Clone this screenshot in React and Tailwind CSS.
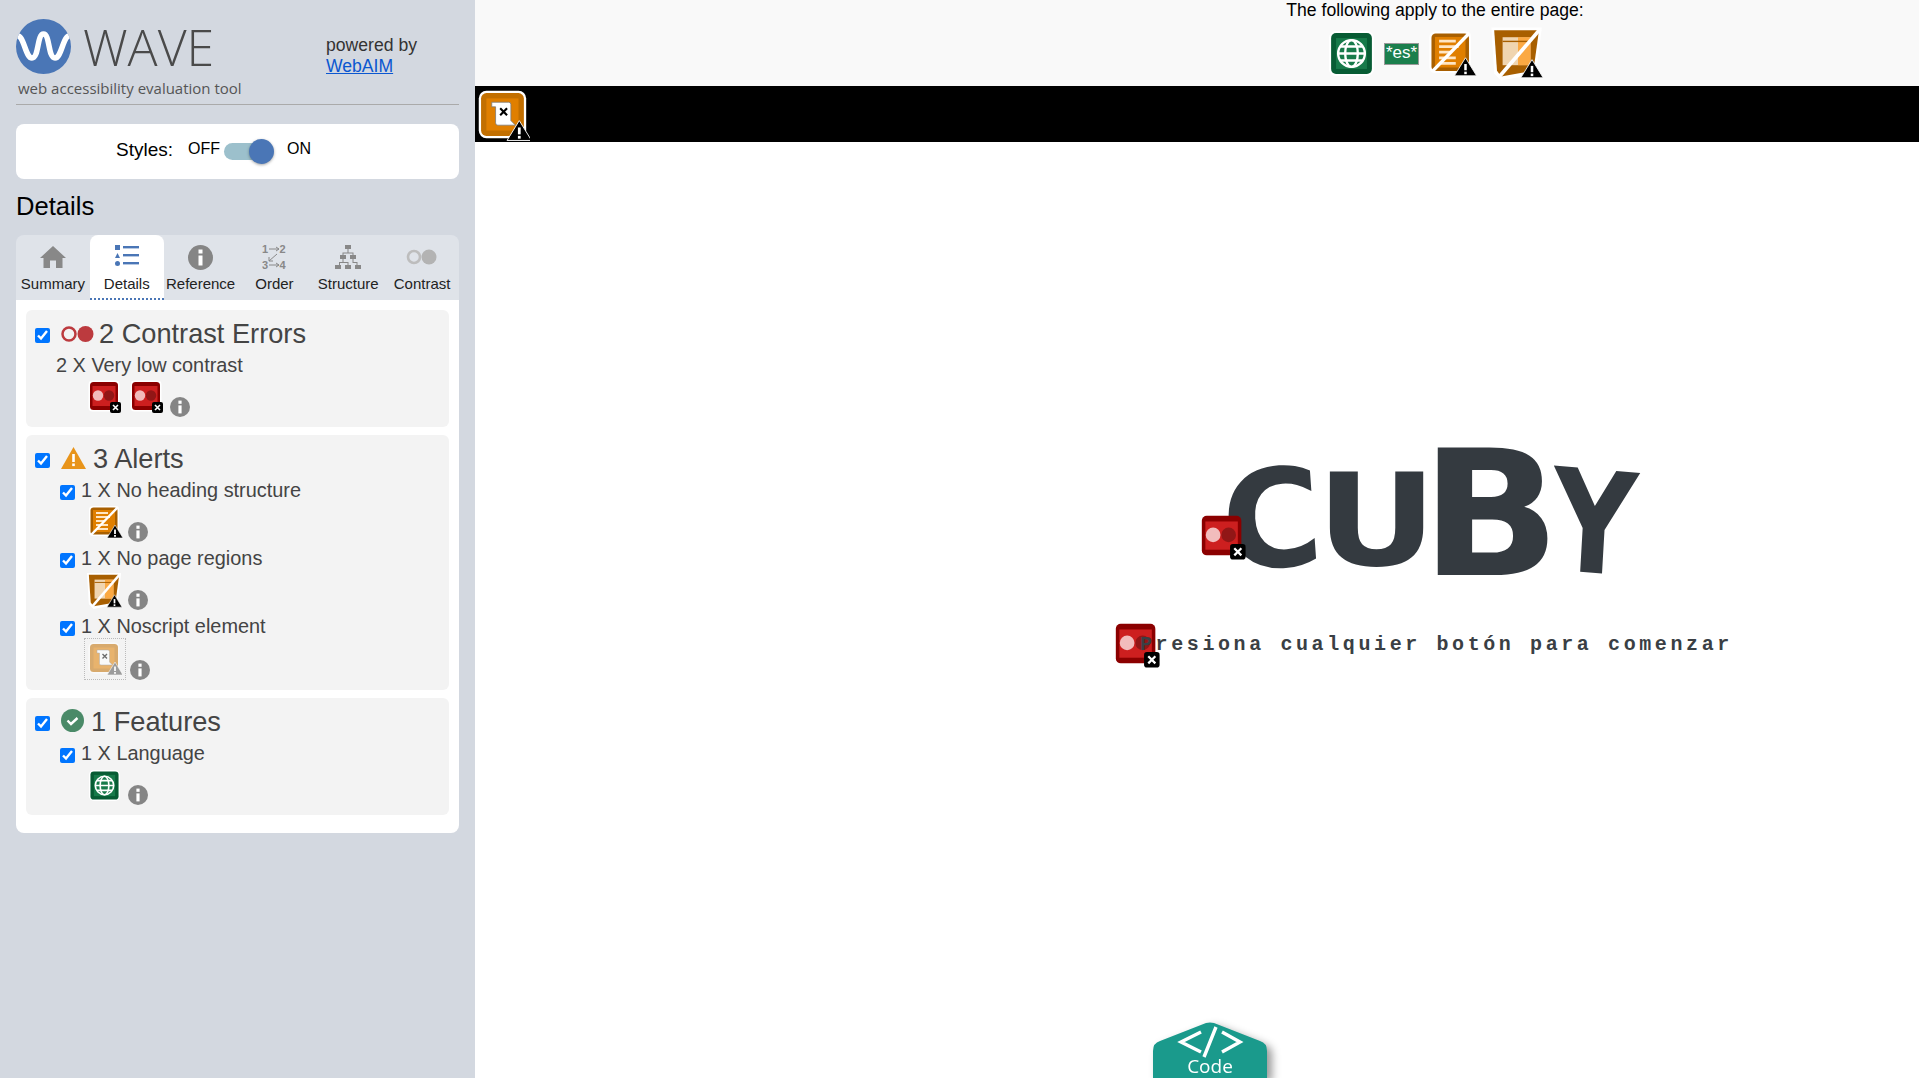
import React from "react";

const arial = "font-['Liberation_Sans',Arial,sans-serif]";

// Small black corner badge with a white x
function ErrorBadge() {
    return (
        <g>
            <rect x="22" y="22" width="11" height="11" rx="2" fill="#000" />
            <path d="M25 25l5 5M30 25l-5 5" stroke="#fff" strokeWidth="1.6" />
        </g>
    );
}

// Small black warning triangle
function AlertBadge({ fill = "#000" }) {
    return (
        <g>
            <path d="M27 20L35 33H19Z" fill={fill} stroke="#fff" strokeWidth="0.6" />
            <rect x="26.1" y="24.5" width="1.8" height="4.5" fill="#fff" />
            <rect x="26.1" y="30" width="1.8" height="1.8" fill="#fff" />
        </g>
    );
}

function ContrastShot({ className }) {
    return (
        <svg viewBox="0 0 34 34" className={className}>
            <rect x="0.5" y="0.5" width="31" height="31" rx="4" fill="#fff" />
            <rect x="2" y="2" width="28" height="28" rx="3.5" fill="#8b0000" />
            <rect x="4.5" y="6" width="23" height="20" fill="#cd1f1f" />
            <circle cx="10" cy="15.5" r="5.2" fill="#f2bcbc" />
            <circle cx="21" cy="15.5" r="5.2" fill="#911616" />
            <ErrorBadge />
        </svg>
    );
}

function HeadingShot({ className }) {
    return (
        <svg viewBox="0 0 36 36" className={className}>
            <rect x="1" y="1" width="30" height="30" rx="4" fill="#fff" />
            <rect x="2.5" y="2.5" width="27" height="27" rx="3" fill="#a85f00" />
            <rect x="5" y="5" width="22" height="22" fill="#e07f00" />
            <path d="M8 8h12M8 12h14M8 16h9M8 20h12M8 24h12" stroke="#ffe6c4" strokeWidth="2" />
            <path d="M30 2L3 30" stroke="#fff" strokeWidth="2.4" />
            <AlertBadge />
        </svg>
    );
}

function RegionShot({ className }) {
    return (
        <svg viewBox="0 0 40 40" className={className}>
            <path d="M1 1H37L33 34L8 39L3 34Z" fill="#fff" />
            <path d="M3 3H35L31 32L8 36L5 32Z" fill="#a85f00" />
            <path d="M9 8H29V28H9Z" fill="#f0d5b0" />
            <path d="M20 8H29V28H20Z" fill="#ff9a1f" opacity="0.75" />
            <path d="M9 11H29" stroke="#a85f00" strokeWidth="1" />
            <path d="M36 2L6 37" stroke="#fff" strokeWidth="2.6" />
            <g transform="translate(3 4)">
                <AlertBadge />
            </g>
        </svg>
    );
}

function NoscriptShot({ className, faded }) {
    return (
        <svg viewBox="0 0 34 34" className={className} opacity={faded ? 0.55 : 1}>
            <rect x="0.5" y="0.5" width="31" height="31" rx="5" fill="#fff" />
            <rect x="2" y="2" width="28" height="28" rx="3.5" fill="#c26f00" />
            <rect x="5.5" y="5.5" width="21" height="21" fill="#e07f00" />
            <path d="M9 8H20Q21.5 8 21.5 9.5V20L24.5 23H13Q11.5 23 11.5 21.5V11H9Z" fill="#fff" stroke="#777" strokeWidth="0.5" />
            <path d="M14.5 12l4.5 4.5M19 12l-4.5 4.5" stroke="#000" strokeWidth="1.4" />
            <AlertBadge fill={faded ? "#555" : "#000"} />
        </svg>
    );
}

function GlobeShot({ className }) {
    return (
        <svg viewBox="0 0 32 32" className={className}>
            <rect x="0" y="0" width="32" height="32" rx="5" fill="#fff" />
            <rect x="1.5" y="1.5" width="29" height="29" rx="3.5" fill="#075c34" />
            <rect x="5" y="5" width="22" height="22" fill="#177a4a" />
            <g fill="none" stroke="#fff" strokeWidth="1.7">
                <circle cx="16" cy="16" r="9.5" />
                <ellipse cx="16" cy="16" rx="4.5" ry="9.5" />
                <path d="M6.5 16H25.5M8 11H24M8 21H24" />
            </g>
        </svg>
    );
}

function InfoDot({ className }) {
    return (
        <svg viewBox="0 0 20 20" className={className}>
            <circle cx="10" cy="10" r="10" fill="#858585" />
            <rect x="8.4" y="3.6" width="3.2" height="3.2" fill="#fff" />
            <rect x="8.4" y="8.4" width="3.2" height="8" fill="#fff" />
        </svg>
    );
}

function CheckRow({ children, className = "" }) {
    return (
        <div className={`flex items-center h-6 pl-[34px] ${className}`}>
            <input type="checkbox" defaultChecked className="w-[15px] h-[15px] mt-[4px] shrink-0" />
            <span className="ml-[6px] text-[19.9px] leading-6 text-[#444]">{children}</span>
        </div>
    );
}

function SectionHead({ icon, children, gap = "ml-[5px]" }) {
    return (
        <div className="flex items-center h-[30px] pl-[9px]">
            <input type="checkbox" defaultChecked className="w-[15px] h-[15px] mt-[2px] mr-[11px] shrink-0" />
            {icon}
            <span className={`${gap} text-[27.2px] leading-[30px] text-[#444]`}>{children}</span>
        </div>
    );
}

const tabs = [
    { label: "Summary", icon: <HomeIcon /> },
    { label: "Details", icon: <ListIcon />, active: true },
    { label: "Reference", icon: <InfoDot className="w-[25px] h-[25px]" /> },
    { label: "Order", icon: <OrderIcon /> },
    { label: "Structure", icon: <TreeIcon /> },
    { label: "Contrast", icon: <ContrastIcon /> },
];

function HomeIcon() {
    return (
        <svg viewBox="0 0 26 22" className="w-[26px] h-[22px]">
            <path d="M13 0L26 12H22.5V22H16V14.5H10V22H3.5V12H0Z" fill="#888" />
        </svg>
    );
}

function ListIcon() {
    return (
        <svg viewBox="0 0 24 24" className="w-6 h-6" fill="#4a76b6">
            <rect x="0" y="0" width="5" height="5" />
            <path d="M2.5 8L5 13H0Z" />
            <circle cx="2.5" cy="18.5" r="2.5" />
            <rect x="8" y="1" width="16" height="2.4" />
            <rect x="8" y="9" width="16" height="2.4" />
            <rect x="8" y="17" width="16" height="2.4" />
        </svg>
    );
}

function OrderIcon() {
    return (
        <svg viewBox="0 0 24 26" className="w-6 h-[26px]">
            <g fontFamily="Liberation Sans, Arial, sans-serif" fontSize="11" fontWeight="700" fill="#888">
                <text x="0" y="9">1</text>
                <text x="17.5" y="9">2</text>
                <text x="0" y="25">3</text>
                <text x="17.5" y="25">4</text>
            </g>
            <g stroke="#888" strokeWidth="1" fill="none">
                <path d="M7 5H17M14 3L17 5L14 7" />
                <path d="M7 21H17M14 19L17 21L14 23" />
                <path d="M15 10L7 17M7 13V17H11" />
            </g>
        </svg>
    );
}

function TreeIcon() {
    return (
        <svg viewBox="0 0 26 24" className="w-[26px] h-6" fill="#888">
            <rect x="10" y="0" width="6" height="4" />
            <rect x="5" y="10" width="6" height="4" />
            <rect x="15" y="10" width="6" height="4" />
            <rect x="0" y="20" width="6" height="4" />
            <rect x="10" y="20" width="6" height="4" />
            <rect x="20" y="20" width="6" height="4" />
            <path d="M12.5 4h1v3.5h5V10h-1V8.5h-9V10h-1V7.5h5ZM7.5 14h1v3h5v3h-1v-2h-4.5v0h-3V20h-1v-3h3.5ZM17.5 14h1v3h4V20h-1v-2h-4Z" />
        </svg>
    );
}

function ContrastIcon() {
    return (
        <svg viewBox="0 0 32 16" className="w-8 h-4">
            <circle cx="8" cy="8" r="6" fill="none" stroke="#bdbdbd" strokeWidth="2.6" />
            <circle cx="23" cy="8" r="7.5" fill="#b3b3b3" />
        </svg>
    );
}

export default function App() {
    return (
        <div className={`flex h-screen overflow-hidden bg-white ${arial}`}>
            {/* Left WAVE panel */}
            <aside className="w-[475px] shrink-0 bg-[#d3d8e0] px-4 pt-[19px]">
                <div className="flex border-b border-[#aaaaaa] pb-[7px]">
                    <div className="w-[310px]">
                        <div className="flex items-center h-[55px]">
                            <svg viewBox="0 0 55 55" className="w-[55px] h-[55px]">
                                <defs>
                                    <clipPath id="logoClip">
                                        <circle cx="27.5" cy="27.5" r="27.5" />
                                    </clipPath>
                                </defs>
                                <circle cx="27.5" cy="27.5" r="27.5" fill="#4a76b6" />
                                <path
                                    d="M0 17C8 14 9 39 16 39C23 39 21 15 27.5 15C34 15 32 39 39 39C46 39 47 14 55 17"
                                    fill="none"
                                    stroke="#fff"
                                    strokeWidth="5.5"
                                    clipPath="url(#logoClip)"
                                />
                            </svg>
                            <span className="ml-[12px] text-[50px] leading-none font-light text-[#4a4a4a] font-['Open_Sans',sans-serif]">WAVE</span>
                        </div>
                        <div className="mt-[5px] ml-[2px] text-[15px] leading-[18px] text-[#555] font-['Open_Sans',sans-serif]">web accessibility evaluation tool</div>
                    </div>
                    <div className="pt-[16px] text-[17.6px] leading-[21px] text-[#333]">
                        <div>powered by</div>
                        <a href="#" className="text-[#0b57d0] underline">WebAIM</a>
                    </div>
                </div>

                <div className="mt-[19px] h-[55px] rounded-lg bg-white flex items-center text-black">
                    <span className="ml-[100px] text-[19px] -mt-[2px]">Styles:</span>
                    <span className="ml-[15px] text-[16px] -mt-[5px]">OFF</span>
                    <div className="relative ml-[4px] w-[46px] h-[17px] rounded-full bg-[#9cc0cc]">
                        <div className="absolute -right-[4px] -top-[4px] w-[25px] h-[25px] rounded-full bg-[#4a76b6] shadow-[0_1px_3px_rgba(0,0,0,0.35)]"></div>
                    </div>
                    <span className="ml-[17px] text-[16px] -mt-[5px]">ON</span>
                </div>

                <h2 className="mt-[12px] text-[25.6px] leading-[30px] text-black">Details</h2>

                <div className="mt-[14px] flex h-[65px] rounded-t-lg bg-[#dfe3e9]">
                    {tabs.map((tab) => (
                        <div
                            key={tab.label}
                            className={`flex-1 flex flex-col items-center rounded-t-lg ${tab.active ? "bg-white border-b-2 border-dotted border-[#4a76b6]" : ""}`}
                        >
                            <div className="h-[26px] mt-[9px] flex items-center justify-center">{tab.icon}</div>
                            <div className="mt-[5px] text-[15px] leading-[18px] whitespace-nowrap text-[#222]">{tab.label}</div>
                        </div>
                    ))}
                </div>

                <div className="h-[533px] rounded-b-lg bg-white p-[10px] flex flex-col gap-2">
                    <section className="h-[117px] rounded-md bg-[#f3f3f3] pt-[9px]">
                        <SectionHead
                            icon={
                                <svg viewBox="0 0 33 16" className="w-[33px] h-4">
                                    <circle cx="8" cy="8" r="6.5" fill="none" stroke="#bc3a3e" strokeWidth="2.5" />
                                    <circle cx="24.5" cy="8" r="8" fill="#bc3a3e" />
                                </svg>
                            }
                        >
                            2 Contrast Errors
                        </SectionHead>
                        <div className="mt-[4px] ml-[30px] text-[19.9px] leading-6 text-[#444]">2 X Very low contrast</div>
                        <div className="mt-[3px] ml-[62px] flex items-start">
                            <ContrastShot className="w-[34px] h-[34px]" />
                            <ContrastShot className="w-[34px] h-[34px] ml-[8px]" />
                            <InfoDot className="w-5 h-5 ml-[6px] mt-[17px]" />
                        </div>
                    </section>

                    <section className="h-[255px] rounded-md bg-[#f3f3f3] pt-[9px]">
                        <SectionHead
                            gap="ml-[7px]"
                            icon={
                                <svg viewBox="0 0 25 22" className="w-[25px] h-[22px] -mt-[3px]">
                                    <path d="M12.5 0L25 22H0Z" fill="#e8941a" />
                                    <rect x="11.2" y="7" width="2.6" height="8" fill="#fff" />
                                    <rect x="11.2" y="16.5" width="2.6" height="2.6" fill="#fff" />
                                </svg>
                            }
                        >
                            3 Alerts
                        </SectionHead>
                        <CheckRow className="mt-[4px]">1 X No heading structure</CheckRow>
                        <div className="mt-[3px] ml-[62px] h-[37px] flex items-start">
                            <HeadingShot className="w-[36px] h-[36px]" />
                            <InfoDot className="w-5 h-5 ml-[4px] mt-[17px]" />
                        </div>
                        <CheckRow className="mt-[4px]">1 X No page regions</CheckRow>
                        <div className="mt-[2px] ml-[60px] h-[42px] flex items-start">
                            <RegionShot className="w-[38px] h-[38px]" />
                            <InfoDot className="w-5 h-5 ml-[4px] mt-[18px]" />
                        </div>
                        <CheckRow>1 X Noscript element</CheckRow>
                        <div className="ml-[58px] flex items-start">
                            <div className="w-[42px] h-[42px] p-[3px] border border-dotted border-[#bbb]">
                                <NoscriptShot faded className="w-[34px] h-[34px]" />
                            </div>
                            <InfoDot className="w-5 h-5 ml-[4px] mt-[22px]" />
                        </div>
                    </section>

                    <section className="h-[117px] rounded-md bg-[#f3f3f3] pt-[9px]">
                        <SectionHead
                            gap="ml-[7px]"
                            icon={
                                <svg viewBox="0 0 23 23" className="w-[23px] h-[23px] -mt-[3px]">
                                    <circle cx="11.5" cy="11.5" r="11.5" fill="#4a8a68" />
                                    <path d="M6.5 11.5L10 15L16.5 9" fill="none" stroke="#fff" strokeWidth="2.4" />
                                </svg>
                            }
                        >
                            1 Features
                        </SectionHead>
                        <CheckRow className="mt-[4px]">1 X Language</CheckRow>
                        <div className="mt-[5px] ml-[63px] flex items-start">
                            <GlobeShot className="w-[31px] h-[31px]" />
                            <InfoDot className="w-5 h-5 ml-[8px] mt-[15px]" />
                        </div>
                    </section>
                </div>
            </aside>

            {/* Page under test */}
            <main className="relative flex-1 min-w-0 flex flex-col">
                <div className="h-[86px] bg-[#f9f9f9] pl-[476px] flex flex-col items-center">
                    <div className="text-[17.6px] leading-[20px] text-black">The following apply to the entire page:</div>
                    <div className="mt-[9px] ml-[5px] flex items-start">
                        <GlobeShot className="w-[45px] h-[45px] mt-[2px]" />
                        <div className="ml-[10px] mt-[14px] w-[35px] h-[22px] bg-[#1b7f4d] border border-[#999] text-white text-[17px] leading-[18px] text-center">*es*</div>
                        <HeadingShot className="ml-[9px] w-[50px] h-[50px] mt-[1px]" />
                        <RegionShot className="ml-[12px] w-[56px] h-[56px] -mt-[3px]" />
                    </div>
                </div>

                <div className="h-[56px] bg-black pl-[3px] pt-[4px]">
                    <NoscriptShot className="w-[52px] h-[52px]" />
                </div>

                {/* Game title */}
                <div className="ml-[724px] mt-[308px] flex items-end h-[129px] text-[#343a40] font-['DejaVu_Sans',sans-serif] font-bold leading-none">
                    <div className="relative z-10 w-[50px] h-[48px] mb-[18px]">
                        <svg viewBox="0 0 34 34" className="w-[48px] h-[48px]">
                            <rect x="2" y="2" width="28" height="28" rx="3.5" fill="#8b0000" />
                            <rect x="4.5" y="6" width="23" height="20" fill="#cd1f1f" />
                            <circle cx="10" cy="15.5" r="5.2" fill="#f2bcbc" />
                            <circle cx="21" cy="15.5" r="5.2" fill="#911616" />
                            <ErrorBadge />
                        </svg>
                    </div>
                    <span className="-ml-[27px] mb-[9px] w-[94px] text-[136px] leading-[100px] [transform:rotate(-4deg)] origin-center">C</span>
                    <span className="ml-[8px] mb-[8px] w-[98px] text-[128px] leading-[100px] [transform:scaleX(1.16)] origin-center">U</span>
                    <span className="ml-[2px] w-[116px] text-[174px] leading-[129px] [transform:scaleX(1.05)] origin-center">B</span>
                    <span className="ml-[4px] w-[86px] text-[142px] leading-[112px] [transform:scaleX(0.82)_rotate(4deg)] origin-center">Y</span>
                </div>

                <div className="ml-[638px] mt-[43px] flex items-center h-[46px]">
                    <ContrastShot className="w-[48px] h-[48px] shrink-0" />
                    <span className="-ml-[21px] text-[20px] font-bold tracking-[3.6px] whitespace-nowrap text-[#3a3f44] font-['Liberation_Mono',monospace]">Presiona cualquier botón para comenzar</span>
                </div>

                {/* Floating code button */}
                <div className="absolute bottom-0 left-[678px] w-[114px] h-[56px] drop-shadow-[5px_4px_4px_rgba(0,0,0,0.4)]">
                    <svg viewBox="0 0 114 56" className="absolute inset-0 w-full h-full">
                        <path d="M0 29Q0 21 7 19L53 1Q57 0 61 1L107 19Q114 21 114 29V56H0Z" fill="#1a9a8c" />
                        <path d="M48 10L28 20L48 30M69 10L87 20L69 30M63 5L51 35" fill="none" stroke="#fff" strokeWidth="3.4" />
                    </svg>
                    <div className="absolute left-0 right-0 top-[34px] text-center text-white text-[19px] leading-[20px] font-['Open_Sans',sans-serif]">Code</div>
                </div>
            </main>
        </div>
    );
}
